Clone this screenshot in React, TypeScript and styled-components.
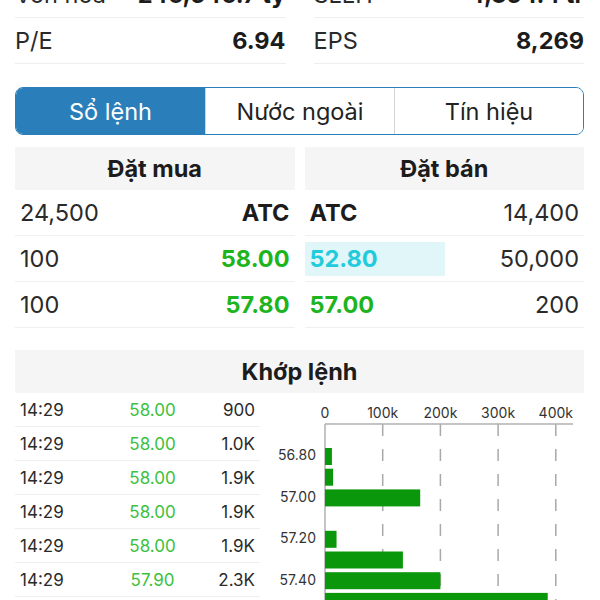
import React from 'react';
import styled, { createGlobalStyle } from 'styled-components';

const GlobalStyle = createGlobalStyle`
  html, body {
    margin: 0;
    padding: 0;
    background: #fff;
  }
  body {
    width: 600px;
    height: 600px;
    overflow: hidden;
    font-family: Inter, "Noto Sans", sans-serif;
    color: #222;
  }
`;

const Page = styled.div`
  padding: 0 16px 0 15px;
  margin-top: -28px;
`;

const StatsGrid = styled.div`
  display: grid;
  grid-template-columns: 1fr 1fr;
  column-gap: 28px;
`;

const StatRow = styled.div`
  height: 46px;
  box-sizing: border-box;
  display: flex;
  align-items: center;
  justify-content: space-between;
  border-bottom: 1px solid #eeeeee;
  font-size: 23.5px;
`;

const StatLabel = styled.span`
  color: #2a2a2a;
`;

const StatValue = styled.span`
  font-weight: 700;
  color: #1c1c1c;
`;

const Tabs = styled.div`
  margin-top: 23px;
  height: 48px;
  box-sizing: border-box;
  display: grid;
  grid-template-columns: repeat(3, 1fr);
  border: 1.5px solid #2a7fba;
  border-radius: 8px;
  overflow: hidden;
`;

const Tab = styled.div<{ $active?: boolean }>`
  display: flex;
  align-items: center;
  justify-content: center;
  font-size: 23.5px;
  background: ${p => (p.$active ? '#2a7fba' : '#fff')};
  color: ${p => (p.$active ? '#fff' : '#222')};
  & + & {
    border-left: 1px solid #d4d4d4;
  }
`;

const OrderBook = styled.div`
  margin-top: 12px;
  display: grid;
  grid-template-columns: 1fr 1fr;
  column-gap: 10px;
`;

const SectionHeader = styled.div<{ $height: number }>`
  height: ${p => p.$height}px;
  display: flex;
  align-items: center;
  justify-content: center;
  background: #f5f5f5;
  font-size: 23.5px;
  font-weight: 700;
  color: #1c1c1c;
`;

const BookRow = styled.div`
  height: 46px;
  box-sizing: border-box;
  display: flex;
  align-items: center;
  justify-content: space-between;
  padding: 0 5px;
  border-bottom: 1px solid #f0f0f0;
  font-size: 23.5px;
`;

const Qty = styled.span`
  color: #2a2a2a;
`;

const tones = {
  plain: '#1c1c1c',
  up: '#1eb41e',
  ceil: '#22cbdc',
};

const BookPrice = styled.span<{ $tone: keyof typeof tones; $mark?: boolean }>`
  font-weight: 700;
  color: ${p => tones[p.$tone]};
  ${p =>
    p.$mark &&
    `
    align-self: center;
    width: 140px;
    height: 34px;
    box-sizing: border-box;
    margin-left: -5px;
    padding-left: 5px;
    display: flex;
    align-items: center;
    background: #e0f6f9;
  `}
`;

const MatchSection = styled.div`
  margin-top: 22px;
`;

const MatchBody = styled.div`
  display: flex;
  align-items: flex-start;
`;

const MatchTable = styled.div`
  width: 245px;
  flex: none;
`;

const MatchRow = styled.div`
  height: 34px;
  box-sizing: border-box;
  display: grid;
  grid-template-columns: 90px 85px 1fr;
  align-items: center;
  padding: 0 5px;
  border-bottom: 1px solid #eeeeee;
  font-size: 17px;
  color: #2a2a2a;
`;

const MatchPrice = styled.span`
  text-align: center;
  color: #3cc13c;
`;

const MatchQty = styled.span`
  text-align: right;
`;

const Chart = styled.svg`
  flex: none;
  overflow: visible;
  font-family: Inter, "Noto Sans", sans-serif;
`;

const stats = [
  ['Vốn hóa', '246,546.7 tỷ', 'SLLH', '4,354.4 tr'],
  ['P/E', '6.94', 'EPS', '8,269'],
];

const bids: [string, string, keyof typeof tones][] = [
  ['24,500', 'ATC', 'plain'],
  ['100', '58.00', 'up'],
  ['100', '57.80', 'up'],
];

const asks: [string, string, keyof typeof tones][] = [
  ['ATC', '14,400', 'plain'],
  ['52.80', '50,000', 'ceil'],
  ['57.00', '200', 'up'],
];

const matches = [
  ['14:29', '58.00', '900'],
  ['14:29', '58.00', '1.0K'],
  ['14:29', '58.00', '1.9K'],
  ['14:29', '58.00', '1.9K'],
  ['14:29', '58.00', '1.9K'],
  ['14:29', '57.90', '2.3K'],
  ['14:29', '57.90', '2.3K'],
];

// khối lượng theo giá, đơn vị nghìn
const volumes = [
  { price: '56.80', v: 12 },
  { price: '', v: 14 },
  { price: '57.00', v: 165 },
  { price: '', v: 0 },
  { price: '57.20', v: 20 },
  { price: '', v: 135 },
  { price: '57.40', v: 200 },
  { price: '', v: 386 },
];

const ZERO_X = 65;
const SCALE = 0.577;
const AXIS_Y = 31;

const VolumeChart = () => (
  <Chart width={324} height={220}>
    {[0, 100, 200, 300, 400].map(t => {
      const x = ZERO_X + t * SCALE;
      return (
        <g key={t}>
          <text
            x={x}
            y={AXIS_Y - 10}
            textAnchor="middle"
            dominantBaseline="middle"
            fontSize={14}
            fill="#333"
          >
            {t === 0 ? '0' : `${t}k`}
          </text>
          {t > 0 && (
            <line
              x1={x}
              x2={x}
              y1={AXIS_Y}
              y2={220}
              stroke="#a8a8a8"
              strokeWidth={1.5}
              strokeDasharray="12 13"
            />
          )}
        </g>
      );
    })}
    <line x1={ZERO_X} x2={ZERO_X + 430 * SCALE} y1={AXIS_Y} y2={AXIS_Y} stroke="#b0b0b0" strokeWidth={1.5} />
    <line x1={ZERO_X} x2={ZERO_X} y1={AXIS_Y} y2={220} stroke="#b0b0b0" strokeWidth={1.5} />
    {volumes.map((b, i) => {
      const cy = 63.5 + i * 20.7;
      return (
        <g key={i}>
          {b.v > 0 && (
            <rect x={ZERO_X} y={cy - 8.5} width={b.v * SCALE} height={17} fill="#0b970b" />
          )}
          {b.price && (
            <text x={ZERO_X - 9} y={cy} textAnchor="end" dominantBaseline="middle" fontSize={14} fill="#333">
              {b.price}
            </text>
          )}
        </g>
      );
    })}
  </Chart>
);

export default function App() {
  return (
    <>
      <GlobalStyle />
      <Page>
        <StatsGrid>
          {stats.map(([l1, v1, l2, v2]) => (
            <React.Fragment key={l1}>
              <StatRow>
                <StatLabel>{l1}</StatLabel>
                <StatValue>{v1}</StatValue>
              </StatRow>
              <StatRow>
                <StatLabel>{l2}</StatLabel>
                <StatValue>{v2}</StatValue>
              </StatRow>
            </React.Fragment>
          ))}
        </StatsGrid>

        <Tabs>
          <Tab $active>Sổ lệnh</Tab>
          <Tab>Nước ngoài</Tab>
          <Tab>Tín hiệu</Tab>
        </Tabs>

        <OrderBook>
          <div>
            <SectionHeader $height={43}>Đặt mua</SectionHeader>
            {bids.map(([q, p, tone], i) => (
              <BookRow key={i}>
                <Qty>{q}</Qty>
                <BookPrice $tone={tone}>{p}</BookPrice>
              </BookRow>
            ))}
          </div>
          <div>
            <SectionHeader $height={43}>Đặt bán</SectionHeader>
            {asks.map(([p, q, tone], i) => (
              <BookRow key={i}>
                <BookPrice $tone={tone} $mark={tone === 'ceil'}>
                  {p}
                </BookPrice>
                <Qty>{q}</Qty>
              </BookRow>
            ))}
          </div>
        </OrderBook>

        <MatchSection>
          <SectionHeader $height={43}>Khớp lệnh</SectionHeader>
          <MatchBody>
            <MatchTable>
              {matches.map(([t, p, q], i) => (
                <MatchRow key={i}>
                  <span>{t}</span>
                  <MatchPrice>{p}</MatchPrice>
                  <MatchQty>{q}</MatchQty>
                </MatchRow>
              ))}
            </MatchTable>
            <VolumeChart />
          </MatchBody>
        </MatchSection>
      </Page>
    </>
  );
}
